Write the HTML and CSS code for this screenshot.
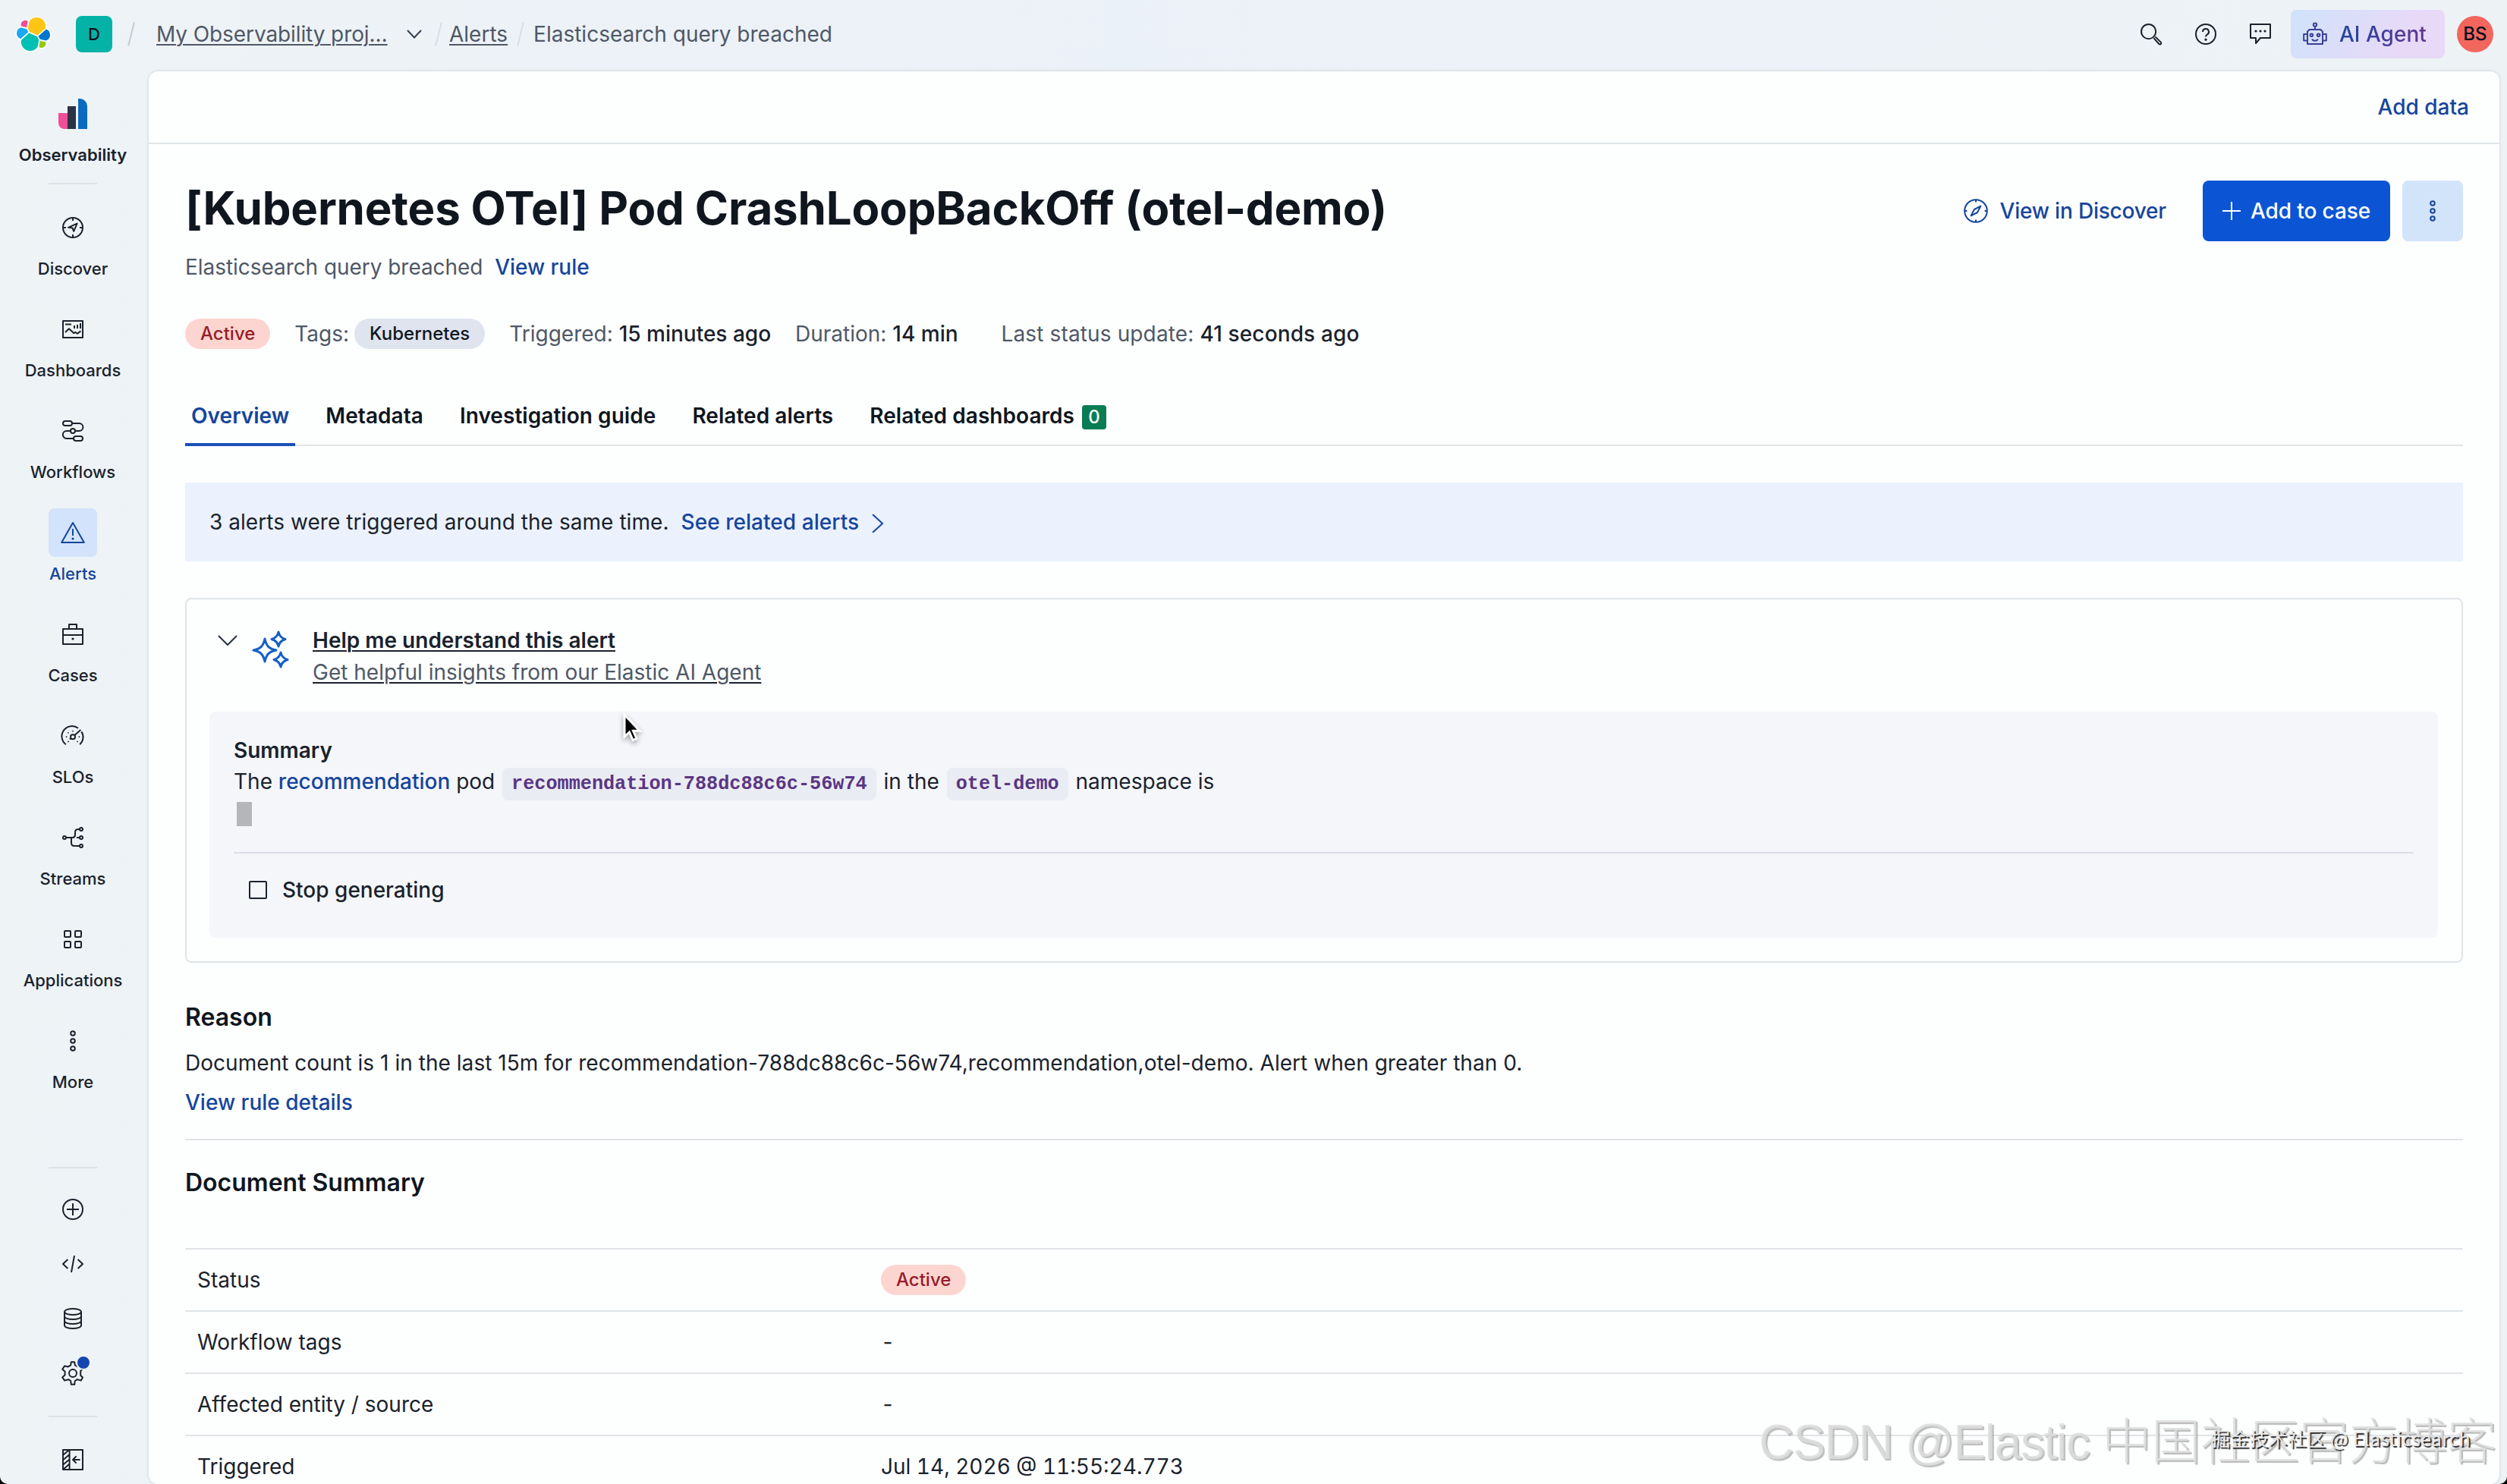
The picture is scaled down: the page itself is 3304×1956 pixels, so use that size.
FILE: index.html
```html
<!DOCTYPE html>
<html lang="en">

<head>
    <meta charset="UTF-8">
    <meta name="viewport" content="width=device-width, initial-scale=1.0">
    <title>Elasticsearch query breached - Alerts - Elastic</title>
    <link rel="stylesheet" href="styles.css">
</head>

<body>
    <div class="app">
        <header class="topbar">
            <svg class="elastic-logo" viewBox="0 0 32 32">
                <path fill="#FFF" d="M32 16.77c0-2.68-1.66-5.03-4.16-5.95A9 9 0 0 0 12.03 3.9 4.8 4.8 0 0 0 4.66 9.2 6.4 6.4 0 0 0 .4 15.2c0 2.7 1.67 5.06 4.18 5.97a9 9 0 0 0 15.78 6.9 4.77 4.77 0 0 0 7.38-5.27A6.4 6.4 0 0 0 32 16.77" />
                <path fill="#FEC514" d="m12.58 13.79 7 3.2 7.07-6.2A7.9 7.9 0 0 0 18.86 1.33a7.9 7.9 0 0 0-6.52 3.44l-1.17 6.1z" />
                <path fill="#00BFB3" d="M5.33 21.21a7.94 7.94 0 0 0 7.82 9.5 7.96 7.96 0 0 0 6.59-3.5l1.17-6.08-1.56-2.98-7.03-3.2z" />
                <path fill="#F04E98" d="m5.29 9.06 4.8 1.13 1.05-5.45a3.8 3.8 0 0 0-5.85 4.32" />
                <path fill="#1BA9F5" d="M4.87 10.2a5.36 5.36 0 0 0-3.54 5.02 5.34 5.34 0 0 0 3.43 4.98l6.73-6.08-1.24-2.64z" />
                <path fill="#93C90E" d="M20.87 27.21a3.78 3.78 0 0 0 5.83-4.31l-4.8-1.12z" />
                <path fill="#07C" d="m21.84 20.48 5.28 1.23a5.36 5.36 0 0 0 3.55-5.02 5.34 5.34 0 0 0-3.44-4.98l-6.9 6.05z" />
            </svg>
            <span class="space-avatar">D</span>
            <nav class="breadcrumbs">
                <i class="slash first"></i>
                <a href="#" class="crumb-project">My Observability proj…</a>
                <svg class="crumb-chevron" viewBox="0 0 20 12"><path d="M1 1l9 9.500 9-9.500" /></svg>
                <i class="slash"></i>
                <a href="#">Alerts</a>
                <i class="slash last"></i>
                <span>Elasticsearch query breached</span>
            </nav>
            <div class="top-actions">
                <svg class="icon" viewBox="0 0 16 16"><circle cx="6.300" cy="6.300" r="4.800" /><path d="M9.700 10.600l3.500 3.900c.8.700 1.900-.4 1.200-1.200L10.700 9.700" /></svg>
                <svg class="icon" viewBox="0 0 16 16"><circle cx="8" cy="8" r="6.500" /><path d="M6 6.500a2 2 0 1 1 3 1.700c-.7.400-1 .8-1 1.500" /><circle class="fill" cx="8" cy="11.600" r=".8" /></svg>
                <svg class="icon" viewBox="0 0 16 16"><path d="M1.500 1.500h13v9H8l-3 3.500v-3.500H1.500z" /><path class="dots" d="M5 6h.01M8 6h.01M11 6h.01" /></svg>
            </div>
            <button class="ai-agent">
                <svg class="icon robot" viewBox="0 0 16 16"><circle cx="8" cy="1.800" r="1.100" /><path d="M8 3v2M4.300 5h7.400l1.300 1.300v8.200H3V6.300zM3 8H.6v4.200H3M13 8h2.400v4.200H13M6 11.300c1 1.400 3 1.400 4 0" /><circle cx="5.700" cy="8.600" r=".9" /><circle cx="10.300" cy="8.600" r=".9" /></svg>
                <span>AI Agent</span>
            </button>
            <span class="user-avatar">BS</span>
        </header>

        <div class="body">
            <aside class="sidenav">
                <a class="solution" href="#">
                    <svg class="solution-logo" viewBox="0 0 38 40"><path fill="#F04E98" d="M0 19h12v21H8a8 8 0 0 1-8-8z" /><path fill="#2a3444" d="M12 10h11v30H12z" /><path fill="#0a6bc0" d="M26 0h2a10 10 0 0 1 10 10v30H26z" /></svg>
                    <span>Observability</span>
                </a>
                <i class="nav-divider"></i>
                <a class="nav-item" href="#">
                    <span class="nav-icon"><svg class="icon" viewBox="0 0 16 16"><circle cx="8" cy="8" r="6.500" /><path d="M8 1.500v2M8 12.500v2M1.500 8h2M12.500 8h2M10.800 5.300L8.600 10.400 7.800 8.300 5 7.900z" /></svg></span>
                    <span>Discover</span>
                </a>
                <a class="nav-item" href="#">
                    <span class="nav-icon"><svg class="icon" viewBox="0 0 16 16"><path d="M1.500 2.500h13v11h-13zM3 4.800h4M9 5.500v2M11 5v2.500M13 4v3.500M3 10l2.500-2.400 3.200 3 .9-.7 1.400 1 2.200-1.700" /></svg></span>
                    <span>Dashboards</span>
                </a>
                <a class="nav-item" href="#">
                    <span class="nav-icon"><svg class="icon" viewBox="0 0 16 16"><rect x="1.500" y="1.500" width="6" height="3" rx="1.500" /><rect x="8.500" y="11.500" width="6" height="3" rx="1.500" /><circle cx="8" cy="8" r="1.500" /><path d="M7.500 3h4.700a2.500 2.500 0 0 1 0 5H9.500M6.500 8H3.900a2.500 2.500 0 0 0 0 5h4.600" /></svg></span>
                    <span>Workflows</span>
                </a>
                <a class="nav-item active" href="#">
                    <span class="nav-icon"><svg class="icon" viewBox="0 0 16 16"><path d="M8 1.500l7.400 13H.6zM8 5.500v4.500" /><circle class="fill" cx="8" cy="12" r=".8" /></svg></span>
                    <span>Alerts</span>
                </a>
                <a class="nav-item" href="#">
                    <span class="nav-icon"><svg class="icon" viewBox="0 0 16 16"><path d="M1.500 4.500h13v10h-13zM5.500 4.500v-3h5v3M1.500 8.500h13" /><circle class="fill" cx="8" cy="11" r=".8" /></svg></span>
                    <span>Cases</span>
                </a>
                <a class="nav-item" href="#">
                    <span class="nav-icon"><svg class="icon" viewBox="0 0 16 16"><path d="M3.400 13.600A6.500 6.500 0 0 1 11.500 2.900M13.700 5.200a6.500 6.500 0 0 1-1.100 8.400M9.200 7.500l4-3.500M6 10.300l.9-.8" /><circle cx="8" cy="8.600" r="1.500" /><path class="tick" d="M3.800 8.600h.01M5 5.900h.01M8 4.800h.01M12.200 8.600h.01M5 11.700h.01M11 11.700h.01" /></svg></span>
                    <span>SLOs</span>
                </a>
                <a class="nav-item" href="#">
                    <span class="nav-icon"><svg class="icon" viewBox="0 0 16 16"><circle cx="2.500" cy="8" r="1" /><circle cx="13.500" cy="2.500" r="1" /><circle cx="13.500" cy="8" r="1" /><circle cx="13.500" cy="13.500" r="1" /><path d="M3.500 8h4.300c1 0 1.700-.7 1.700-1.700V4.500c0-1.300.7-2 2-2h1M10.500 8h2M7 8v3.500c0 1.300.7 2 2 2h3.500" /></svg></span>
                    <span>Streams</span>
                </a>
                <a class="nav-item" href="#">
                    <span class="nav-icon"><svg class="icon" viewBox="0 0 16 16"><rect x="2.500" y="2.500" width="4" height="4" rx=".5" /><rect x="9.500" y="2.500" width="4" height="4" rx=".5" /><rect x="2.500" y="9.500" width="4" height="4" rx=".5" /><rect x="9.500" y="9.500" width="4" height="4" rx=".5" /></svg></span>
                    <span>Applications</span>
                </a>
                <a class="nav-item" href="#">
                    <span class="nav-icon"><svg class="icon" viewBox="0 0 16 16"><circle cx="8" cy="3" r="1.400" /><circle cx="8" cy="8" r="1.400" /><circle cx="8" cy="13" r="1.400" /></svg></span>
                    <span>More</span>
                </a>

                <div class="nav-footer">
                    <i class="nav-divider"></i>
                    <span class="nav-icon"><svg class="icon" viewBox="0 0 16 16"><circle cx="8" cy="8" r="6.500" /><path d="M8 4v8M4 8h8" /></svg></span>
                    <span class="nav-icon"><svg class="icon" viewBox="0 0 16 16"><path d="M4.700 5L1.500 8l3.200 3M11.300 5l3.200 3-3.200 3M9 2.500l-2 11" /></svg></span>
                    <span class="nav-icon"><svg class="icon" viewBox="0 0 16 16"><ellipse cx="8" cy="3.500" rx="5.500" ry="2" /><path d="M2.500 3.500v9c0 1.100 2.400 2 5.500 2s5.500-.9 5.500-2v-9M2.500 6.500c0 1.100 2.400 2 5.500 2s5.500-.9 5.500-2M2.500 9.500c0 1.100 2.400 2 5.500 2s5.500-.9 5.500-2" /></svg></span>
                    <span class="nav-icon"><svg class="icon" viewBox="0 0 16 16"><path d="M6.600 2.700L6.900.6h2.200l.3 2.100 1.600.9 2-.8 1.500 2.400-1.400 1.300v3l1.400 1.300-1.100 2-2.400-.7-1.600.9-.3 2.400H6.900L6.600 13l-1.600-.9-2.400.7-1.500-2.100 1.700-1.600V6.900L1.100 5.400l1.500-2.200 2.400.5z" /><circle cx="8" cy="8" r="2.500" /></svg><b class="nav-dot"></b></span>
                    <i class="nav-divider"></i>
                    <span class="nav-icon"><svg class="icon" viewBox="0 0 16 16"><path d="M1.500 1.500h13v13h-13zM5.800 1.500v13M12.800 8H8.300M10.300 5.700L8 8l2.300 2.300M1.500 5l4-3.500M1.500 8.200l4.300-3.700M1.500 11.400l4.300-3.700M1.500 14.500l4.300-3.700" /></svg></span>
                </div>
            </aside>

            <main class="panel">
                <div class="app-menu"><a href="#">Add data</a></div>

                <div class="content">
                    <div class="page-head">
                        <h1>[Kubernetes OTel] Pod CrashLoopBackOff (otel-demo)</h1>
                        <div class="page-actions">
                            <a class="discover-link" href="#">
                                <svg class="icon" viewBox="0 0 16 16"><circle cx="8" cy="8" r="7.400" /><path d="M8 .6v1.600M8 13.800v1.600M.6 8h1.600M13.800 8h1.600M11.200 4.800L9 9l-4.200 2.200L7 7z" /></svg>
                                View in Discover
                            </a>
                            <button class="btn-fill"><svg class="plus" viewBox="0 0 24 24"><path d="M12 0v24M0 12h24" /></svg>Add to case</button>
                            <button class="btn-more"><svg class="icon" viewBox="0 0 16 16"><circle cx="8" cy="3" r="1.400" /><circle cx="8" cy="8" r="1.400" /><circle cx="8" cy="13" r="1.400" /></svg></button>
                        </div>
                    </div>

                    <p class="subtitle">Elasticsearch query breached <a href="#">View rule</a></p>

                    <div class="meta">
                        <span class="badge danger">Active</span>
                        <span class="meta-tags">Tags: <span class="badge neutral">Kubernetes</span></span>
                        <span class="meta-triggered">Triggered: <b>15 minutes ago</b></span>
                        <span class="meta-duration">Duration: <b>14 min</b></span>
                        <span class="meta-updated">Last status update: <b>41 seconds ago</b></span>
                    </div>

                    <div class="tabs">
                        <a class="tab selected" href="#">Overview</a>
                        <a class="tab" href="#">Metadata</a>
                        <a class="tab" href="#">Investigation guide</a>
                        <a class="tab" href="#">Related alerts</a>
                        <a class="tab" href="#">Related dashboards <span class="count">0</span></a>
                    </div>

                    <div class="callout">
                        <span>3 alerts were triggered around the same time.</span>
                        <a href="#">See related alerts</a>
                        <svg class="callout-arrow" viewBox="0 0 16 24"><path d="M1 0l13 12L1 24" /></svg>
                    </div>

                    <section class="insight">
                        <div class="insight-head">
                            <svg class="insight-chevron" viewBox="0 0 26 14"><path d="M1 1l12 12L25 1" /></svg>
                            <svg class="sparkles" viewBox="0 0 50 50"><path d="M17 11c2 9 5 13 15 15-10 2-13 6-15 15-2-9-5-13-15-15 10-2 13-6 15-15zM35 2c1.200 5.500 3.500 8 9 9.500-5.500 1.500-7.800 4-9 9.500-1.200-5.500-3.500-8-9-9.500 5.500-1.500 7.800-4 9-9.500zM38 29c1.200 5.500 3.500 8 9 9.500-5.500 1.500-7.800 4-9 9.500-1.200-5.500-3.500-8-9-9.500 5.500-1.500 7.800-4 9-9.500z" /></svg>
                            <div class="insight-title">
                                <strong>Help me understand this alert</strong>
                                <span>Get helpful insights from our Elastic AI Agent</span>
                            </div>
                        </div>
                        <div class="insight-body">
                            <div class="markdown">
                                <strong>Summary</strong>
                                <p>The <a href="#">recommendation</a> pod <code>recommendation-788dc88c6c-56w74</code> in the <code>otel-demo</code> namespace is</p>
                                <i class="typing"></i>
                            </div>
                            <button class="stop"><i class="stop-box"></i>Stop generating</button>
                        </div>
                        <svg class="pointer" viewBox="0 0 26 40"><path d="M3 3v29l6.500-6 4.500 10.500 5-2.200-4.500-10H23z" /></svg>
                    </section>

                    <section class="reason">
                        <h2>Reason</h2>
                        <p>Document count is 1 in the last 15m for recommendation-788dc88c6c-56w74,recommendation,otel-demo. Alert when greater than 0.</p>
                        <a href="#">View rule details</a>
                    </section>

                    <section class="summary">
                        <h2>Document Summary</h2>
                        <dl>
                            <div class="row"><dt>Status</dt><dd><span class="badge danger">Active</span></dd></div>
                            <div class="row"><dt>Workflow tags</dt><dd>-</dd></div>
                            <div class="row"><dt>Affected entity / source</dt><dd>-</dd></div>
                            <div class="row"><dt>Triggered</dt><dd>Jul 14, 2026 @ 11:55:24.773</dd></div>
                        </dl>
                    </section>
                </div>
            </main>
        </div>
        <div class="mark mark-large"><span>CSDN @Elastic </span>中国社区官方博客</div>
        <div class="mark mark-small">掘金技术社区 @ Elasticsearch</div>
    </div>
</body>

</html>
```

FILE: styles.css
```css
:root {
    --text: #1a222c;
    --heading: #0f161e;
    --subdued: #4f5866;
    --link: #15459c;
    --border: #dfe4e7;
}

* {
    margin: 0;
    padding: 0;
    box-sizing: border-box;
}

html {
    background: #000;
}

body {
    height: 1956px;
    overflow: hidden;
    font-family: Inter, 'Liberation Sans', sans-serif;
    font-size: 28px;
    line-height: 40px;
    color: var(--text);
}

a {
    color: var(--link);
    text-decoration: none;
    font-weight: 500;
}

button {
    border: 0;
    font: inherit;
    font-weight: 500;
}

b {
    font-weight: 500;
}

.app {
    position: relative;
    display: flex;
    flex-direction: column;
    height: 1956px;
    overflow: hidden;
    white-space: nowrap;
    background: linear-gradient(90deg, #eef3f6, #ebf1f8 45%, #edf3f5);
    border-radius: 0 0 10px 10px;
}

.icon {
    width: 32px;
    height: 32px;
    flex: none;
    fill: none;
    stroke: currentColor;
    stroke-width: 1;
    stroke-linejoin: round;
    overflow: visible;
}

.icon .fill {
    fill: currentColor;
    stroke: none;
}

.icon .dots {
    stroke-width: 1.6;
    stroke-linecap: round;
}

.icon .tick {
    stroke-width: .9;
    stroke-linecap: round;
}

/* top bar */

.topbar {
    display: flex;
    align-items: center;
    flex: none;
    height: 94px;
    padding: 0 18px 4px 20px;
}

.elastic-logo {
    width: 48px;
    height: 48px;
}

.space-avatar,
.user-avatar {
    display: flex;
    align-items: center;
    justify-content: center;
    width: 48px;
    height: 48px;
    font-size: 24px;
    font-weight: 500;
    color: #07101f;
}

.space-avatar {
    margin-left: 32px;
    border-radius: 8px;
    background: #04b3a6;
    font-size: 22px;
}

.user-avatar {
    margin-left: 16px;
    border-radius: 50%;
    background: #f3665d;
}

.breadcrumbs {
    display: flex;
    align-items: center;
    color: var(--subdued);
}

.breadcrumbs a {
    color: var(--subdued);
    font-weight: 400;
    text-decoration: underline;
    text-decoration-thickness: 2px;
    text-underline-offset: 3px;
}

.crumb-project {
    width: 304px;
    letter-spacing: -.1px;
}

.crumb-chevron {
    width: 20px;
    height: 12px;
    margin: 0 20px 0 26px;
    fill: none;
    stroke: #343f52;
    stroke-width: 2;
}

.slash {
    width: 2px;
    height: 32px;
    margin: 0 13px 0 1px;
    background: #d9dfe6;
    transform: rotate(14deg);
}

.slash.first {
    margin: 0 32px 0 24px;
    background: #c3cad3;
}

.slash.last {
    margin: 0 16px;
}

.top-actions {
    display: flex;
    gap: 40px;
    margin-left: auto;
}

.ai-agent {
    display: flex;
    align-items: center;
    gap: 16px;
    width: 203px;
    height: 64px;
    margin-left: 24px;
    padding-left: 16px;
    border-radius: 8px;
    background: linear-gradient(120deg, #d0e2fb, #e8d9f7 75%);
    color: #3b3f94;
}

.ai-agent span {
    color: transparent;
    background: linear-gradient(90deg, #2346a0, #62358f);
    background-clip: text;
}

/* side navigation */

.body {
    display: flex;
    flex: 1;
    min-height: 0;
}

.sidenav {
    display: flex;
    flex-direction: column;
    align-items: center;
    width: 196px;
    padding: 36px 4px 0 0;
    flex: none;
}

.solution,
.nav-item {
    display: flex;
    flex-direction: column;
    align-items: center;
    font-size: 22px;
    line-height: 32px;
    color: var(--text);
}

.solution {
    font-weight: 600;
}

.solution-logo {
    width: 38px;
    height: 40px;
    margin-bottom: 18px;
}

.nav-divider {
    width: 64px;
    height: 2px;
    background: #dce1e6;
}

.sidenav > .nav-divider {
    margin: 21px 0 25px;
}

.nav-item {
    margin-bottom: 32px;
}

.nav-icon {
    position: relative;
    display: flex;
    align-items: center;
    justify-content: center;
    width: 64px;
    height: 64px;
    border-radius: 8px;
}

.nav-item .nav-icon {
    margin-bottom: 6px;
}

.nav-item.active {
    color: var(--link);
}

.active .nav-icon {
    background: #d2e3fb;
}

.nav-footer {
    display: flex;
    flex-direction: column;
    align-items: center;
    gap: 8px;
    margin-top: auto;
}

.nav-footer .nav-divider {
    margin: 16px 0 14px;
}

.nav-footer .nav-divider + .nav-icon:last-child {
    margin-top: 2px;
}

.nav-dot {
    position: absolute;
    top: 8px;
    left: 36px;
    width: 20px;
    height: 20px;
    border: 2px solid #eff4f8;
    border-radius: 50%;
    background: #1546b0;
}

/* main panel */

.panel {
    flex: 1;
    min-width: 0;
    margin-right: 10px;
    border-radius: 12px;
    background: #fdfefe;
    box-shadow: 0 0 3px 1px #d3dade;
}

.app-menu {
    display: flex;
    align-items: center;
    justify-content: flex-end;
    height: 96px;
    padding-right: 40px;
    border-bottom: 2px solid var(--border);
}

.content {
    padding: 48px 48px 0;
}

.page-head {
    display: flex;
    justify-content: space-between;
    height: 80px;
}

h1 {
    font-size: 60px;
    line-height: 72px;
    font-weight: 700;
    letter-spacing: -.17px;
    color: var(--heading);
}

.page-actions {
    display: flex;
    align-items: center;
}

.discover-link {
    display: flex;
    align-items: center;
    gap: 16px;
    margin-right: 48px;
    font-weight: 450;
    letter-spacing: -.2px;
}

.btn-fill {
    display: flex;
    align-items: center;
    justify-content: center;
    gap: 13px;
    width: 247px;
    height: 80px;
    margin-right: 16px;
    border-radius: 8px;
    background: #0b55d5;
    color: #fff;
    letter-spacing: -.1px;
}

.plus {
    width: 24px;
    height: 24px;
    stroke: #fff;
    stroke-width: 2;
}

.btn-more {
    display: flex;
    align-items: center;
    justify-content: center;
    width: 80px;
    height: 80px;
    border-radius: 8px;
    background: #d2e4fa;
    color: var(--link);
}

.subtitle {
    margin-top: 14px;
    letter-spacing: -.05px;
    color: var(--subdued);
}

.subtitle a {
    margin-left: 8px;
}

.badge {
    display: inline-flex;
    align-items: center;
    height: 40px;
    padding: 0 20px;
    border-radius: 20px;
    font-size: 24px;
    font-weight: 500;
}

.danger {
    background: #fdd5d0;
    color: #951c2b;
}

.neutral {
    background: #dfe4ef;
    color: #0f1822;
}

.meta {
    display: flex;
    align-items: center;
    height: 40px;
    margin-top: 48px;
    color: var(--subdued);
}

.meta b {
    color: var(--text);
}

.meta-tags {
    display: flex;
    align-items: center;
    gap: 7px;
    margin: 0 32px;
}

.meta-triggered {
    margin-right: 32px;
}

.meta-duration {
    margin-right: 57px;
}

.meta-updated {
    letter-spacing: .13px;
}

.tabs {
    display: flex;
    height: 80px;
    margin-top: 48px;
    gap: 32px;
    box-shadow: inset 0 -2px var(--border);
}

.tab {
    display: flex;
    align-items: center;
    padding: 0 8px;
    font-weight: 620;
    letter-spacing: .05px;
    color: var(--heading);
}

.tab.selected {
    color: var(--link);
    box-shadow: inset 0 -4px #1b50b8;
}

.count {
    display: flex;
    align-items: center;
    justify-content: center;
    width: 32px;
    height: 32px;
    margin: 4px 0 0 10px;
    border-radius: 4px;
    background: #087c52;
    color: #fff;
    font-size: 24px;
    font-weight: 500;
}

.callout {
    display: flex;
    align-items: center;
    height: 104px;
    margin-top: 48px;
    padding-left: 32px;
    letter-spacing: .05px;
    background: #ebf1fd;
}

.callout a {
    margin: 0 17px 0 16px;
    font-weight: 530;
}

.callout-arrow {
    width: 16px;
    height: 24px;
    margin-top: 4px;
    fill: none;
    stroke: var(--link);
    stroke-width: 2;
}

/* AI insight */

.insight {
    position: relative;
    margin-top: 48px;
    padding: 0 31px 31px 30px;
    border: 2px solid var(--border);
    border-radius: 8px;
}

.insight-head {
    display: flex;
    height: 148px;
    padding: 33px 0 0 11px;
}

.insight-chevron {
    width: 26px;
    height: 14px;
    margin: 14px 19px 0 0;
    fill: none;
    stroke: #273142;
    stroke-width: 2;
}

.sparkles {
    width: 50px;
    height: 50px;
    margin: 8px 30px 0 0;
    fill: none;
    stroke: #1560c4;
    stroke-width: 3;
    stroke-linejoin: round;
}

.insight-title {
    display: flex;
    flex-direction: column;
    align-items: flex-start;
    line-height: 42px;
    color: var(--text);
    text-decoration: underline;
    text-decoration-thickness: 2px;
    text-underline-offset: 3px;
}

.insight-title strong {
    font-weight: 620;
}

.insight-title span {
    color: var(--subdued);
}

.insight-body {
    padding: 31px 32px 31px;
    border-radius: 8px;
    background: #f5f6fa;
}

.markdown {
    display: flex;
    flex-direction: column;
    height: 156px;
    line-height: 41px;
    border-bottom: 2px solid #d9dee7;
}

.markdown strong {
    font-weight: 600;
}

.markdown a {
    font-weight: 460;
}

code {
    margin: 0 2px;
    padding: 7px 12px;
    border-radius: 8px;
    background: #eaecf3;
    font: bold 25.2px 'Liberation Mono', monospace;
    color: #593684;
}

.typing {
    width: 20px;
    height: 32px;
    margin: 6px 0 0 4px;
    background: #b4b6b9;
}

.stop {
    display: flex;
    align-items: center;
    height: 64px;
    margin-top: 16px;
    padding-left: 20px;
    background: none;
    color: var(--text);
}

.stop-box {
    width: 24px;
    height: 24px;
    margin-right: 20px;
    border: 2px solid #1a2332;
    border-radius: 2px;
}

.pointer {
    position: absolute;
    top: 149px;
    left: 574px;
    width: 26px;
    height: 40px;
    stroke: #fff;
    stroke-width: 3;
    filter: drop-shadow(0 3px 3px rgba(0, 0, 0, .35));
}

/* reason and summary */

h2 {
    font-size: 32px;
    line-height: 40px;
    font-weight: 620;
    color: var(--heading);
}

.reason {
    display: flex;
    flex-direction: column;
    height: 182px;
    margin-top: 52px;
    border-bottom: 2px solid var(--border);
}

.reason p {
    margin: 20px 0 12px;
    letter-spacing: .04px;
}

.summary {
    padding-top: 36px;
}

.summary dl {
    margin-top: 66px;
}

.row {
    display: flex;
    align-items: center;
    height: 82px;
    padding-left: 16px;
    border-top: 2px solid var(--border);
}

.row dt {
    width: 901px;
}

.row dd {
    display: flex;
    font-variant-numeric: tabular-nums;
}

.mark {
    position: absolute;
    line-height: 1;
}

.mark-large {
    top: 1868px;
    left: 2318px;
    font-family: 'Liberation Sans', 'Noto Sans CJK SC', sans-serif;
    font-size: 65px;
    font-weight: 300;
    color: rgba(222, 222, 222, .85);
    text-shadow: 2px 2px 1px rgba(120, 120, 120, .5);
}

.mark-large span {
    font-size: 64px;
    letter-spacing: -1.3px;
}

.mark-small {
    top: 1883px;
    left: 2914px;
    font-family: 'Noto Sans CJK SC', sans-serif;
    font-size: 25px;
    letter-spacing: .2px;
    color: #e8e8e8;
    text-shadow: 2px 2px 1px rgba(0, 0, 0, .85);
}
```
